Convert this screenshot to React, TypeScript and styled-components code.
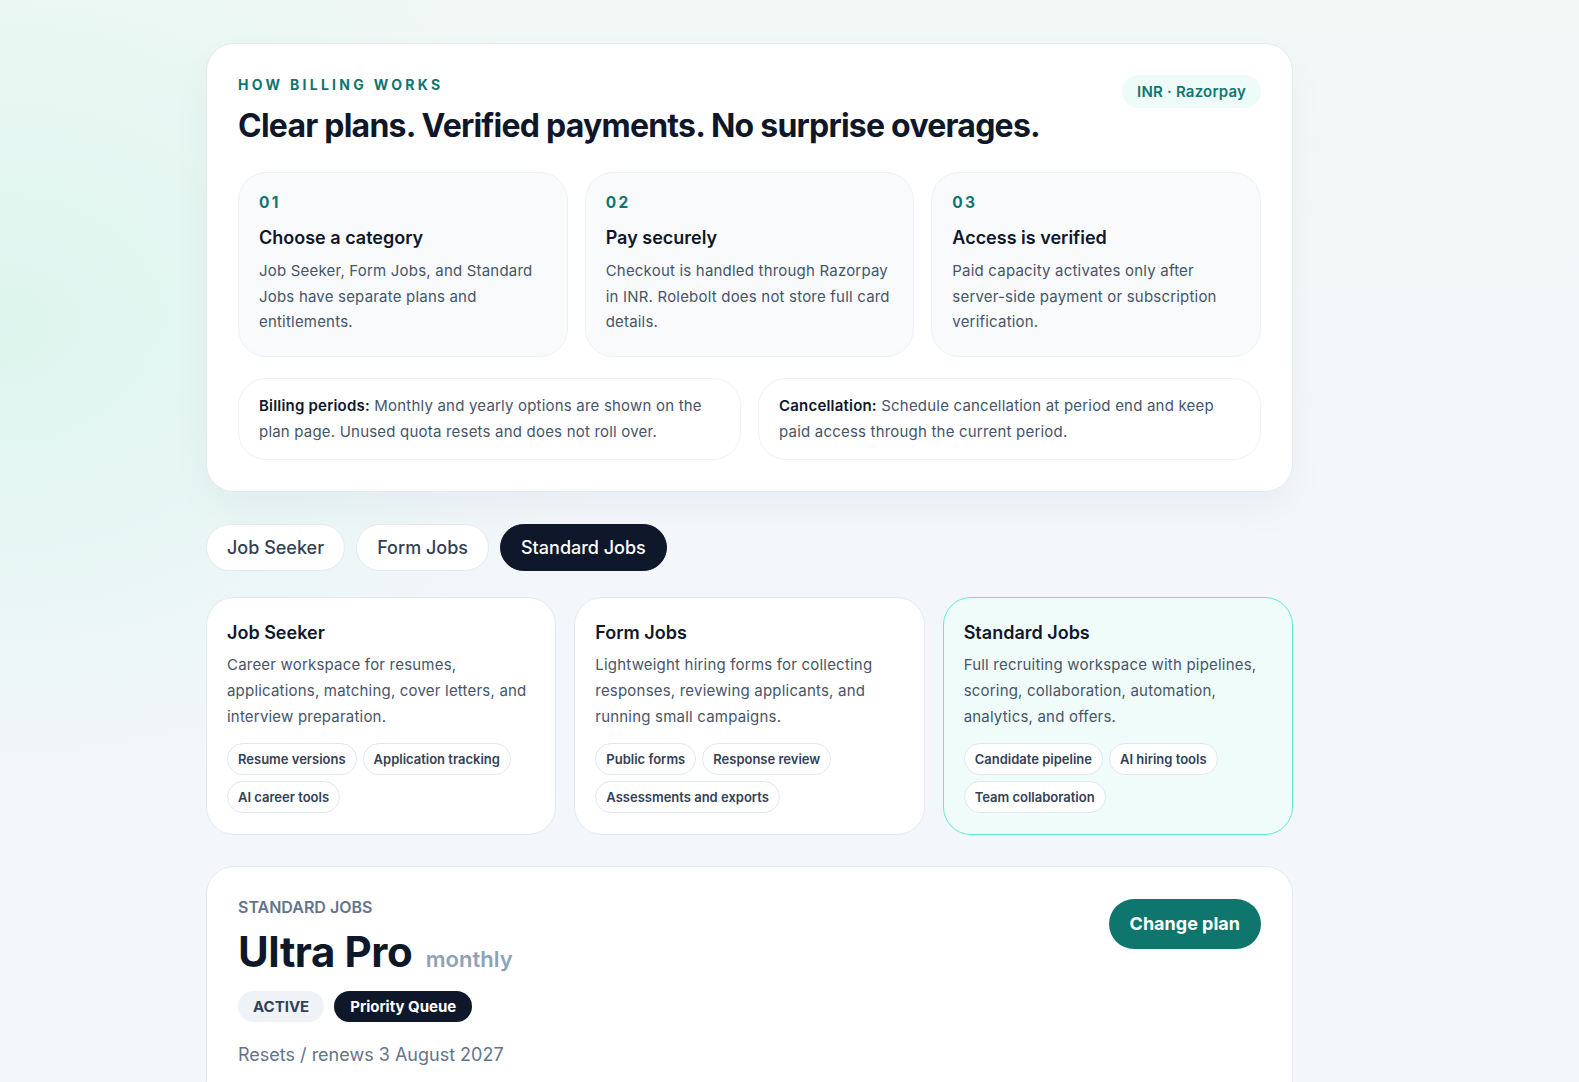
import React from "react";
import styled, { createGlobalStyle } from "styled-components";

const GlobalStyle = createGlobalStyle`
  html, body {
    margin: 0;
    padding: 0;
  }
  body {
    font-family: Inter, "Noto Sans", "Liberation Sans", sans-serif;
    color: #0f172a;
    background: #f4f7fb;
    -webkit-font-smoothing: antialiased;
  }
  * {
    box-sizing: border-box;
  }
`;

type Step = { num: string; title: string; text: string };
type Category = { key: string; title: string; text: string; chips: string[] };

const steps: Step[] = [
  {
    num: "01",
    title: "Choose a category",
    text: "Job Seeker, Form Jobs, and Standard Jobs have separate plans and entitlements.",
  },
  {
    num: "02",
    title: "Pay securely",
    text: "Checkout is handled through Razorpay in INR. Rolebolt does not store full card details.",
  },
  {
    num: "03",
    title: "Access is verified",
    text: "Paid capacity activates only after server-side payment or subscription verification.",
  },
];

const categories: Category[] = [
  {
    key: "seeker",
    title: "Job Seeker",
    text: "Career workspace for resumes, applications, matching, cover letters, and interview preparation.",
    chips: ["Resume versions", "Application tracking", "AI career tools"],
  },
  {
    key: "form",
    title: "Form Jobs",
    text: "Lightweight hiring forms for collecting responses, reviewing applicants, and running small campaigns.",
    chips: ["Public forms", "Response review", "Assessments and exports"],
  },
  {
    key: "standard",
    title: "Standard Jobs",
    text: "Full recruiting workspace with pipelines, scoring, collaboration, automation, analytics, and offers.",
    chips: ["Candidate pipeline", "AI hiring tools", "Team collaboration"],
  },
];

const App: React.FC = () => {
  const active = "standard";
  return (
    <Page>
      <GlobalStyle />
      <Container>
        <BillingCard>
          <BillingHead>
            <div>
              <Eyebrow>How billing works</Eyebrow>
              <Headline>Clear plans. Verified payments. No surprise overages.</Headline>
            </div>
            <Pill>INR · Razorpay</Pill>
          </BillingHead>

          <StepGrid>
            {steps.map((s) => (
              <StepCard key={s.num}>
                <StepNum>{s.num}</StepNum>
                <StepTitle>{s.title}</StepTitle>
                <StepText>{s.text}</StepText>
              </StepCard>
            ))}
          </StepGrid>

          <InfoGrid>
            <InfoCard>
              <strong>Billing periods:</strong> Monthly and yearly options are shown on the plan
              page. Unused quota resets and does not roll over.
            </InfoCard>
            <InfoCard>
              <strong>Cancellation:</strong> Schedule cancellation at period end and keep paid
              access through the current period.
            </InfoCard>
          </InfoGrid>
        </BillingCard>

        <Tabs>
          {categories.map((c) => (
            <Tab key={c.key} $active={c.key === active}>
              {c.title}
            </Tab>
          ))}
        </Tabs>

        <CategoryGrid>
          {categories.map((c) => (
            <CategoryCard key={c.key} $active={c.key === active}>
              <CategoryTitle>{c.title}</CategoryTitle>
              <CategoryText>{c.text}</CategoryText>
              <ChipRow>
                {c.chips.map((chip) => (
                  <Chip key={chip}>{chip}</Chip>
                ))}
              </ChipRow>
            </CategoryCard>
          ))}
        </CategoryGrid>

        <PlanCard>
          <PlanInfo>
            <PlanCategory>Standard Jobs</PlanCategory>
            <PlanName>
              Ultra Pro <span>monthly</span>
            </PlanName>
            <BadgeRow>
              <Badge>ACTIVE</Badge>
              <Badge $dark>Priority Queue</Badge>
            </BadgeRow>
            <Renews>Resets / renews 3 August 2027</Renews>
          </PlanInfo>
          <ChangeButton>Change plan</ChangeButton>
        </PlanCard>
      </Container>
    </Page>
  );
};

const Page = styled.div`
  height: 1082px;
  overflow: hidden;
  background:
    radial-gradient(ellipse 900px 700px at 0% 30%, rgba(214, 245, 234, 0.75), rgba(214, 245, 234, 0) 70%),
    linear-gradient(180deg, #f1f8f6 0%, #f3f7fa 40%, #f3f6fb 100%);
  padding-top: 43px;
`;

const Container = styled.div`
  width: 1087px;
  margin-left: 206px;
  display: flex;
  flex-direction: column;
`;

const BillingCard = styled.section`
  background: #ffffff;
  border: 1px solid #e4e9f0;
  border-radius: 28px;
  padding: 31px;
  box-shadow: 0 18px 40px rgba(15, 23, 42, 0.04);
`;

const BillingHead = styled.div`
  display: flex;
  justify-content: space-between;
  align-items: flex-start;
`;

const Eyebrow = styled.div`
  font-size: 14px;
  font-weight: 700;
  letter-spacing: 0.235em;
  text-transform: uppercase;
  color: #0f766e;
  line-height: 20px;
`;

const Headline = styled.h2`
  margin: 11px 0 0;
  font-size: 32px;
  line-height: 40px;
  font-weight: 700;
  letter-spacing: -0.024em;
  color: #0f172a;
`;

const Pill = styled.div`
  height: 33px;
  padding: 0 15px;
  display: flex;
  align-items: center;
  border-radius: 999px;
  background: #effbf8;
  color: #0f766e;
  font-size: 15px;
  font-weight: 600;
  letter-spacing: 0.2px;
`;

const StepGrid = styled.div`
  margin-top: 26px;
  display: grid;
  grid-template-columns: repeat(3, 1fr);
  gap: 17px;
`;

const StepCard = styled.div`
  background: #f8fafc;
  border: 1px solid #eef2f6;
  border-radius: 28px;
  padding: 20px 20px 21px;
  min-height: 181px;
`;

const StepNum = styled.div`
  font-size: 15.5px;
  font-weight: 700;
  letter-spacing: 0.15em;
  color: #0f766e;
  line-height: 20px;
`;

const StepTitle = styled.h3`
  margin: 13px 0 0;
  font-size: 18px;
  line-height: 24px;
  font-weight: 600;
  color: #0f172a;
`;

const StepText = styled.p`
  margin: 8px 0 0;
  font-size: 15px;
  line-height: 25.5px;
  letter-spacing: 0.2px;
  color: #475569;
`;

const InfoGrid = styled.div`
  margin-top: 21px;
  display: grid;
  grid-template-columns: 1fr 1fr;
  gap: 17px;
`;

const InfoCard = styled.div`
  border: 1px solid #eef2f6;
  border-radius: 28px;
  padding: 14px 20px 14px;
  font-size: 15px;
  line-height: 26px;
  letter-spacing: 0.2px;
  color: #475569;

  strong {
    color: #0f172a;
    font-weight: 600;
  }
`;

const Tabs = styled.div`
  margin-top: 32px;
  display: flex;
  gap: 11px;
`;

const Tab = styled.button<{ $active?: boolean }>`
  height: 47px;
  padding: 0 20px;
  border-radius: 999px;
  font-family: inherit;
  font-size: 18px;
  font-weight: 500;
  border: 1px solid ${(p) => (p.$active ? "#0f172a" : "#e4e9f0")};
  background: ${(p) => (p.$active ? "#0f172a" : "#ffffff")};
  color: ${(p) => (p.$active ? "#ffffff" : "#334155")};
`;

const CategoryGrid = styled.div`
  margin-top: 26px;
  display: grid;
  grid-template-columns: repeat(3, 1fr);
  gap: 18px;
`;

const CategoryCard = styled.div<{ $active?: boolean }>`
  border-radius: 28px;
  padding: 23px 20px 20px;
  min-height: 238px;
  background: ${(p) => (p.$active ? "#f0fcf9" : "#ffffff")};
  border: ${(p) => (p.$active ? "1.5px solid #5eead4" : "1px solid #e4e9f0")};
`;

const CategoryTitle = styled.h3`
  margin: 0;
  font-size: 18px;
  line-height: 24px;
  font-weight: 600;
  color: #0f172a;
`;

const CategoryText = styled.p`
  margin: 7px 0 0;
  font-size: 15px;
  line-height: 26px;
  letter-spacing: 0.2px;
  color: #475569;
`;

const ChipRow = styled.div`
  margin-top: 13px;
  display: flex;
  flex-wrap: wrap;
  gap: 6px;
`;

const Chip = styled.span`
  height: 32px;
  padding: 0 10px;
  display: inline-flex;
  align-items: center;
  border-radius: 999px;
  border: 1px solid #e2e8f0;
  background: #ffffff;
  font-size: 13px;
  font-weight: 600;
  color: #334155;
`;

const PlanCard = styled.section`
  margin-top: 31px;
  background: #ffffff;
  border: 1px solid #e4e9f0;
  border-radius: 28px;
  padding: 29px 31px 40px;
  display: flex;
  justify-content: space-between;
  align-items: flex-start;
`;

const PlanInfo = styled.div`
  display: flex;
  flex-direction: column;
`;

const PlanCategory = styled.div`
  font-size: 16px;
  font-weight: 600;
  text-transform: uppercase;
  color: #64748b;
  line-height: 22px;
`;

const PlanName = styled.h2`
  margin: 9px 0 0;
  font-size: 42px;
  line-height: 50px;
  font-weight: 700;
  letter-spacing: -0.01em;
  color: #0f172a;

  span {
    margin-left: 4px;
    font-size: 22px;
    font-weight: 600;
    letter-spacing: 0;
    color: #8ea3b3;
  }
`;

const BadgeRow = styled.div`
  margin-top: 7px;
  display: flex;
  gap: 10px;
`;

const Badge = styled.span<{ $dark?: boolean }>`
  height: 31px;
  padding: 0 ${(p) => (p.$dark ? "16px" : "15px")};
  display: inline-flex;
  align-items: center;
  border-radius: 999px;
  font-size: 15px;
  font-weight: 700;
  background: ${(p) => (p.$dark ? "#0f172a" : "#eff3f8")};
  color: ${(p) => (p.$dark ? "#ffffff" : "#334155")};
`;

const Renews = styled.div`
  margin-top: 20px;
  font-size: 18px;
  line-height: 26px;
  color: #64748b;
`;

const ChangeButton = styled.button`
  margin-top: 3px;
  height: 50px;
  padding: 0 21px;
  border: none;
  border-radius: 999px;
  background: #0f766e;
  color: #ffffff;
  font-family: inherit;
  font-size: 18px;
  font-weight: 700;
`;

export default App;
